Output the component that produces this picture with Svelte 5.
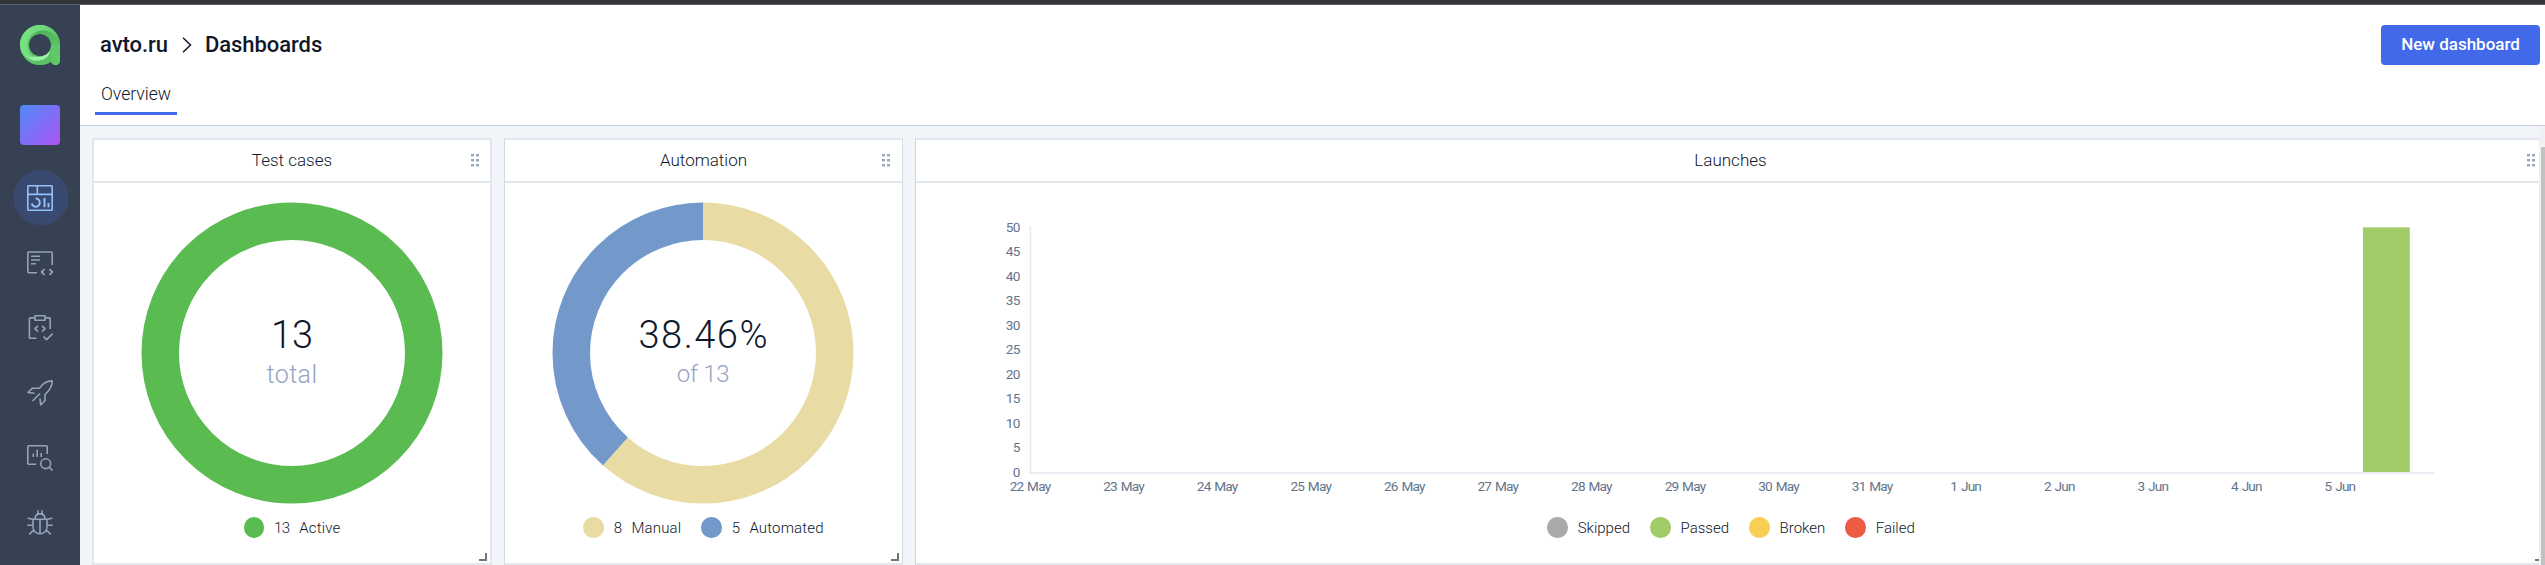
<script>
  const nav = ['dashboard', 'cases', 'plans', 'launches', 'analytics', 'defects'];
  const days = ['22 May', '23 May', '24 May', '25 May', '26 May', '27 May', '28 May', '29 May', '30 May', '31 May', '1 Jun', '2 Jun', '3 Jun', '4 Jun', '5 Jun'];
  const ticks = [50, 45, 40, 35, 30, 25, 20, 15, 10, 5, 0];
  const step = 93.57;
  const statuses = [
    ['Skipped', '#aaaaaa'],
    ['Passed', '#a1cb66'],
    ['Broken', '#f8cf56'],
    ['Failed', '#ed5c42']
  ];
  const mid = 131.75;
  const circ = 2 * Math.PI * mid;
  const cards = [
    { title: 'Test cases', value: '13', sub: 'total', cls: 'first', parts: [[13, 'Active', '#5abc50']] },
    { title: 'Automation', value: '38.46%', sub: 'of 13', cls: 'second', parts: [[8, 'Manual', '#e9dba4'], [5, 'Automated', '#7399cb']] }
  ];
</script>

{#snippet cardHead(title)}
  <div class="card-head">
    <h2>{title}</h2>
    <svg class="grip" width="8" height="13" viewBox="0 0 8 13" fill="#9aa5bd">
      {#each [0, 5, 10] as y}
        <rect x="0" {y} width="3" height="2.4" /><rect x="5" {y} width="3" height="2.4" />
      {/each}
    </svg>
  </div>
{/snippet}

<div class="page">
  <div class="topline"></div>
  <div class="shell">
    <aside>
      <svg class="logo" width="40" height="40" viewBox="0 0 40 40">
        <defs>
          <linearGradient id="lg1" x1="0.2" y1="0" x2="0.7" y2="1">
            <stop offset="0" stop-color="#4fb157" /><stop offset="1" stop-color="#62cc6b" />
          </linearGradient>
          <linearGradient id="lg2" x1="0" y1="0" x2="1" y2="0">
            <stop offset="0" stop-color="#78e184" /><stop offset="0.6" stop-color="#70d97c" /><stop offset="1" stop-color="#59c262" />
          </linearGradient>
          <linearGradient id="lg3" x1="0" y1="0" x2="1" y2="0.2">
            <stop offset="0" stop-color="#74dd80" /><stop offset="0.6" stop-color="#9beeaa" /><stop offset="1" stop-color="#a5f2b2" />
          </linearGradient>
        </defs>
        <circle cx="20" cy="20" r="15.4" fill="none" stroke="#5cc365" stroke-width="9.2" />
        <path d="M14 9C22 1 39 5 40 20V35.5a4.5 4.5 0 0 1-9 0V20C31 13 25 8 14 9Z" fill="url(#lg1)" />
        <path d="M31 20v15.5a4.5 4.5 0 0 0 9 0V20Z" fill="#60c869" />
        <path d="M20 0C31 0 38 8 39.5 16C35 8 25 2 16 7C9 10 6 17 8.500 26C11 34 25 37 30 26C29 34 20 37 12 35C5 32 0 27 0 20C0 9 9 0 20 0Z" fill="url(#lg2)" />
        <path d="M1 25C4 31 9 33 14 31.500C20 33 27 31 30 25.500C29 34 20 37 12 35C7 33 3 30 1 25Z" fill="url(#lg3)" />
        <circle cx="20" cy="20" r="10.8" fill="#374154" />
      </svg>
      <div class="workspace"></div>
      <nav>
        {#each nav as item}
          <button class:active={item === 'dashboard'} aria-label={item}>
            <svg width="26" height="26" viewBox="0 0 26 26" fill="none" stroke="currentColor" stroke-width="1.6" stroke-linecap="butt" stroke-linejoin="round">
              {#if item === 'dashboard'}
                <rect x=".8" y=".8" width="24.4" height="24.4" rx=".8" />
                <path d="M.8 9.400H25.200M10.300 .8V9.400" />
                <path d="M8.600 13.500A4.100 4.100 0 1 1 4.700 18.500" stroke-width="2" />
                <path d="M17.500 13V22.200M21.500 18V22.200" stroke-width="2" />
              {:else if item === 'cases'}
                <path d="M25.200 15V2.800a.8.8 0 0 0-.8-.8H1.600a.8.8 0 0 0-.8.8V21.900a.8.8 0 0 0 .8.8H10" />
                <path d="M4 6.200H13M4 10H13M4 13.700H9" />
                <path d="M17.600 19.200L14.600 22L17.600 24.800M22.400 19.200L25.400 22L22.400 24.800" stroke-width="1.800" />
              {:else if item === 'plans'}
                <path d="M7.500 2.900H3.200a.8.8 0 0 0-.8.8V22.500a.8.8 0 0 0 .8.8H9.500M18 2.900H22.400a.8.8 0 0 1 .8.8V14" />
                <rect x="8" y=".8" width="10" height="4.400" />
                <path d="M11 10.800L8 13.700L11 16.600M15 10.800L18 13.700L15 16.600" stroke-width="1.700" />
                <path d="M16.500 21.500L19.500 24.700L25.700 18.700" stroke-width="1.700" />
              {:else if item === 'launches'}
                <path d="M12.500 8.200C16 3 20.500 .8 25.200 .9C25.300 5.500 23 9.800 18 14.500V20.500L13.700 25L13 18.500M12.500 8.200H5.500L.9 12.500L7.500 13.300M13 13.500L5.500 21" />
              {:else if item === 'analytics'}
                <path d="M20.200 9V1.600a.8.800 0 0 0-.8-.8H1.600a.8.800 0 0 0-.8.8V18.400a.8.800 0 0 0 .8.8H9.300M6.300 8.500V12M10.200 4.800V12M14.200 8V12" />
                <circle cx="18.700" cy="18.700" r="4.900" /><path d="M22.200 22.200L25.500 25.500" />
              {:else}
                <path d="M6 9.300H20V16C20 21 17 23.700 13 23.700S6 21 6 16ZM13 9.300V23.700M8 9.300C8 5 10 3.900 13 3.900S18 5 18 9.300M10.800 4V.3M15.200 4V.3M6 9.500L.5 8M20 9.500L25.500 8M6 15.200H.3M20 15.200H25.700M7.200 19.500L2.200 24.400M18.800 19.500L23.800 24.400" />
              {/if}
            </svg>
          </button>
        {/each}
      </nav>
    </aside>

    <main>
      <header>
        <div class="head-row">
          <div class="crumbs">
            <span>avto.ru</span>
            <svg width="10" height="16" viewBox="0 0 10 16" fill="none" stroke="#0f172a" stroke-width="1.500"><path d="M1 .7L8.500 8L1 15.300" /></svg>
            <span>Dashboards</span>
          </div>
          <button class="primary">New dashboard</button>
        </div>
        <div class="tabs"><span class="tab">Overview</span></div>
      </header>

      <div class="content">
        <div class="board">
          {#each cards as card}
            <section class="card {card.cls}">
              {@render cardHead(card.title)}
              <div class="donut">
                <svg width="302" height="302" viewBox="-151 -151 302 302" fill="none" stroke-width="37.500">
                  {#if card.parts.length === 1}
                    <circle r={mid} stroke={card.parts[0][2]} />
                  {:else}
                    <g transform="rotate(-90)">
                      <circle r={mid} stroke={card.parts[1][2]} stroke-dasharray="0 {(circ * 8) / 13} {(circ * 5) / 13} 0" />
                      <circle r={mid} stroke={card.parts[0][2]} stroke-dasharray="{(circ * 8) / 13} {circ}" />
                    </g>
                  {/if}
                </svg>
                <div class="summary">
                  <strong>{card.value}</strong>
                  <span>{card.sub}</span>
                </div>
              </div>
              <div class="legend">
                {#each card.parts as [count, name, color]}
                  <div class="item"><i style="background:{color}"></i><span class="count">{count}</span><span class="name">{name}</span></div>
                {/each}
              </div>
              <div class="resize"></div>
            </section>
          {/each}

          <section class="card third">
            {@render cardHead('Launches')}
            <svg class="chart" width="1628" height="322" viewBox="916 183 1628 322">
              <path d="M1029 227.500H1030.500V473M1029 473H2435" fill="none" stroke="#e3e9f1" stroke-width="1.500" />
              <rect x="2363" y="227.400" width="46.800" height="244.600" fill="#a1cb66" />
              {#each ticks as t, i}
                <text x="1019.5" y={231.8 + i * 24.5} text-anchor="end">{t}</text>
              {/each}
              {#each days as d, i}
                <text x={1030 + i * step} y="491" text-anchor="middle">{d}</text>
              {/each}
            </svg>
            <div class="legend">
              {#each statuses as [name, color]}
                <div class="item"><i style="background:{color}"></i><span>{name}</span></div>
              {/each}
            </div>
            <div class="resize"></div>
          </section>
        </div>
        <div class="scroll"><div class="thumb"></div></div>
      </div>
    </main>
  </div>
</div>

<style>
  :global(body) { overflow: hidden; }
  * { box-sizing: border-box; }
  .page { width: 2545px; height: 565px; display: flex; flex-direction: column; overflow: hidden; background: #fff; color: #0f172a; font-family: Roboto, 'Liberation Sans', sans-serif; }
  .topline { height: 5px; flex: none; background: #35363a; border-bottom: 1px solid #5d5e62; }
  .shell { flex: 1; min-height: 0; display: flex; }
  aside { width: 80px; flex: none; background: #374154; display: flex; flex-direction: column; align-items: center; padding-top: 20px; }
  .logo { display: block; }
  .workspace { width: 40px; height: 40px; margin-top: 40px; border-radius: 4px; background: linear-gradient(135deg, #4f8af8, #ac54f5); }
  nav { margin-top: 20px; display: flex; flex-direction: column; }
  nav button { width: 55px; height: 65px; padding: 0; border: 0; display: grid; place-items: center; color: #94a3b8; background: transparent; }
  nav button.active { color: #93c0fb; background: radial-gradient(circle at 28px 32.5px, #3a496f 27.2px, transparent 27.8px); }
  nav svg { display: block; }
  main { flex: 1; min-width: 0; display: flex; flex-direction: column; }
  header { height: 121px; flex: none; border-bottom: 1px solid #cbd3df; padding: 20px 5px 0 15px; }
  .head-row { height: 40px; display: flex; justify-content: space-between; align-items: center; }
  .crumbs { display: flex; align-items: center; padding-left: 5px; font-size: 22px; line-height: 30px; font-weight: 500; letter-spacing: -.05px; }
  .crumbs svg { margin: 0 13px 0 14px; }
  .primary { width: 159px; height: 40px; padding: 0 0 2px; border: 0; border-radius: 4px; background: #4169e9; color: #fff; font: 500 17px/38px Roboto, sans-serif; }
  .tabs { display: flex; margin-top: 15px; }
  .tab { width: 82px; height: 35px; text-align: center; font-size: 17.6px; line-height: 29px; font-weight: 300; border-bottom: 3px solid #4169e9; }
  .content { flex: 1; min-height: 0; display: flex; background: #f1f5fa; }
  .board { flex: 1; min-width: 0; overflow: hidden; display: flex; padding: 12px 0 0 12px; }
  .card { flex: none; height: 427px; background: #fff; border: 2px solid #e2e7ee; position: relative; display: flex; flex-direction: column; }
  .first { width: 400px; }
  .second { width: 399px; margin-left: 12px; border-left: 1px solid #d3dae5; border-right: 1px solid #d3dae5; }
  .third { width: 1632px; margin-left: 12px; border-left: 1px solid #cbd3df; }
  .card-head { height: 43px; flex: none; border-bottom: 2px solid #e2e7ee; display: grid; grid-template-columns: 1fr auto 1fr; align-items: center; }
  h2 { grid-column: 2; margin: 0; padding-bottom: 2px; font-size: 17px; line-height: 36px; font-weight: 300; }
  .grip { justify-self: end; margin-right: 11px; }
  .second .grip { margin-right: 12px; }
  .third .grip { margin-right: 10px; }
  .donut { height: 302px; margin-top: 19px; display: grid; place-items: center; }
  .donut > * { grid-area: 1 / 1; }
  .second .donut { margin-right: 1px; }
  .summary { display: flex; flex-direction: column; align-items: center; font-weight: 300; padding-bottom: 2px; }
  .summary strong { font-size: 38px; line-height: 42px; font-weight: 300; }
  .second strong { letter-spacing: 1.500px; margin-right: -1.500px; }
  .summary span { font-size: 25px; line-height: 33px; padding-top: 2px; color: #94a3bf; }
  .first .summary span { letter-spacing: .4px; }
  .second .summary span { font-size: 24px; letter-spacing: -.3px; }
  .legend { display: flex; justify-content: center; gap: 20px; margin-top: 13px; height: 21px; font-size: 15px; line-height: 21px; font-weight: 300; }
  .item { display: flex; align-items: center; gap: 10px; }
  .item span { padding-top: 2px; }
  .item .count { letter-spacing: -.7px; }
  .item .name { letter-spacing: .15px; }
  .item i { width: 20.500px; height: 20.500px; border-radius: 50%; }
  .chart { display: block; flex: none; }
  .third .legend { margin-top: 12px; padding-left: 1px; }
  .chart text { font: 400 13.600px Roboto, sans-serif; letter-spacing: -.8px; word-spacing: 1.200px; fill: #64748b; }
  .resize { position: absolute; right: 3px; bottom: 2px; width: 8px; height: 8px; border-right: 2.500px solid #747474; border-bottom: 2.500px solid #747474; }
  .third .resize { right: 2px; }
  .scroll { width: 6px; flex: none; background: #f1f1f1; padding: 21px 0 0 2px; }
  .thumb { height: 100%; background: #c1c1c1; }
</style>
